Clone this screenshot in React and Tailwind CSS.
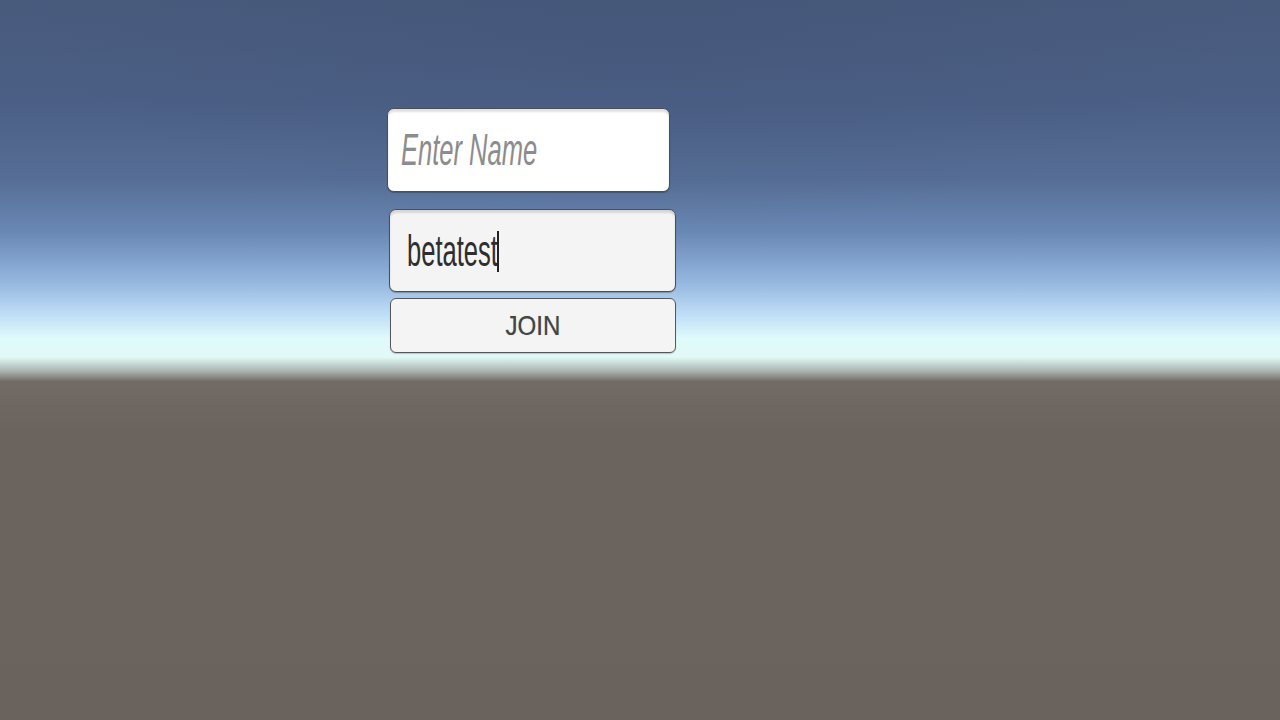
import React from 'react';

const SKY =
  'bg-[linear-gradient(180deg,#485b7d_0%,#4b5f85_14%,#566e96_25%,#6887b3_32%,#93b5de_39%,#bddcf6_43.5%,#dffafb_47%,#e2f9f6_49.6%,#a9b1ad_51.6%,#716a65_53%,#6b635e_60%,#6a625d_100%)]';

// Login panel floating over the scene's sky and ground
export default function App() {
  return (
    <div className={`relative h-screen w-full overflow-hidden ${SKY} font-['Liberation_Sans',Arial,sans-serif]`}>
      <div className="pointer-events-none absolute inset-0 bg-[radial-gradient(ellipse_70%_45%_at_50%_0%,rgba(60,75,110,0.25),transparent_70%)]" aria-hidden="true" />

      <div className="relative flex flex-col items-start pl-[387px] pt-[108px]">
        <div className="flex h-[84px] w-[283px] items-center rounded-[7px] border-[1.5px] border-[#4d4f55] bg-white pl-[13px] shadow-[inset_0_3px_2px_rgba(0,0,0,0.12),0_1px_1px_rgba(0,0,0,0.25)]">
          <span className="origin-left scale-x-[0.58] whitespace-nowrap text-[44px] italic leading-none text-[#8c8c8c]">
            Enter Name
          </span>
        </div>

        <div className="ml-[2px] mt-[17px] flex h-[83px] w-[287px] items-center rounded-[7px] border-[1.5px] border-[#4d4f55] bg-[#f4f4f4] pl-[17px] shadow-[inset_0_3px_2px_rgba(0,0,0,0.12),0_1px_1px_rgba(0,0,0,0.25)]">
          <span className="relative flex items-center">
            <span className="origin-left scale-x-[0.58] whitespace-nowrap text-[44px] leading-none text-[#2e2e2e]">
              betatest
            </span>
            <span className="absolute left-[90px] top-[2px] h-[41px] w-[2px] bg-[#222]" aria-hidden="true" />
          </span>
        </div>

        <button
          type="button"
          className="ml-[3px] mt-[6px] flex h-[55px] w-[286px] items-center justify-center rounded-[6px] border-[1.5px] border-[#55575c] bg-[#f4f4f4] shadow-[0_1px_1px_rgba(0,0,0,0.2)]"
        >
          <span className="scale-x-[0.86] text-[28px] leading-none text-[#444] [text-shadow:0_0_1px_rgba(0,0,0,0.35)]">
            JOIN
          </span>
        </button>
      </div>
    </div>
  );
}
